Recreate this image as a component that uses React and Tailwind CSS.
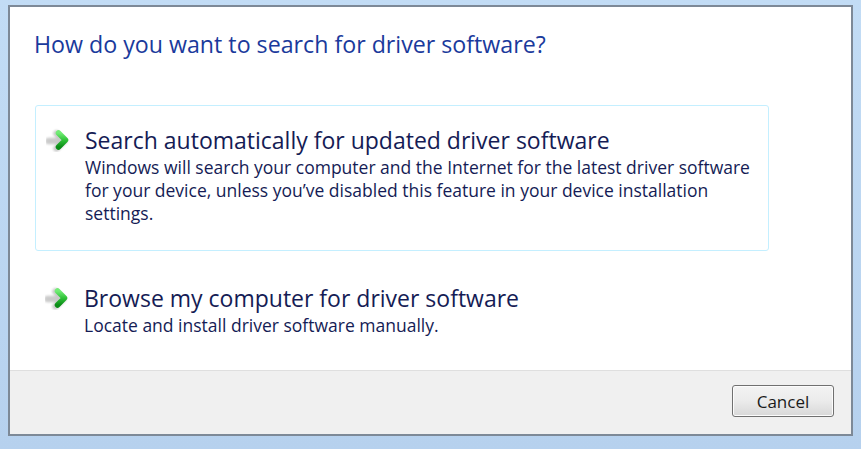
import React from "react";

function Arrow({ id }) {
  return (
    <svg width="24" height="24" viewBox="0 0 24 24" className="shrink-0">
      <defs>
        <linearGradient id={"ag" + id} x1="0" y1="0" x2="0" y2="1">
          <stop offset="0" stopColor="#72ec75" />
          <stop offset="0.5" stopColor="#2fc238" />
          <stop offset="1" stopColor="#0b8c17" />
        </linearGradient>
        <filter id={"sh" + id} x="-40%" y="-40%" width="180%" height="180%">
          <feGaussianBlur stdDeviation="1.3" />
        </filter>
      </defs>
      <g opacity="0.28" filter={"url(#sh" + id + ")"} transform="translate(-1.5,1)">
        <path d="M4 12 H18" stroke="#444" strokeWidth="6.5" strokeLinecap="round" fill="none" />
        <path d="M12 4.5 L19.5 12 L12 19.5" stroke="#444" strokeWidth="6.5" strokeLinecap="round" strokeLinejoin="round" fill="none" />
      </g>
      <path d="M5 12 H18" stroke={"url(#ag" + id + ")"} strokeWidth="5.5" strokeLinecap="round" fill="none" />
      <path d="M12.5 5 L19.5 12 L12.5 19" stroke={"url(#ag" + id + ")"} strokeWidth="5.5" strokeLinecap="round" strokeLinejoin="round" fill="none" />
    </svg>
  );
}

export default function App() {
  const font = { fontFamily: '"Open Sans", "Noto Sans", sans-serif' };
  return (
    <div
      className="w-[861px] h-[449px] bg-gradient-to-b from-[#c2dcf5] to-[#b6d1ee] pt-[5px] pl-[8px] pr-[8px] pb-[13px]"
      style={font}
    >
      <div className="h-full border-2 border-[#7d8997] bg-white flex flex-col">
        <div className="flex-1 pl-[24px] pr-[60px]">
          <div className="pt-[22px] text-[23.2px] leading-[30px] text-[#1a3a9c] whitespace-nowrap">
            How do you want to search for driver software?
          </div>
          <div className="mt-[46px] ml-[1px] w-[734px] h-[146px] border border-[#c4efff] rounded-[3px] flex pl-[10px] pt-[18px]">
            <div className="pt-[4px] mr-[15px]">
              <Arrow id="a" />
            </div>
            <div className="text-[#151c55] whitespace-nowrap">
              <div className="text-[23px] leading-[32px]">
                Search automatically for updated driver software
              </div>
              <div className="text-[17.5px] leading-[23px] mt-[0px]">
                Windows will search your computer and the Internet for the latest driver software
                <br />
                for your device, unless you’ve disabled this feature in your device installation
                <br />
                settings.
              </div>
            </div>
          </div>
          <div className="mt-[31px] ml-[1px] flex pl-[10px]">
            <div className="pt-[4px] mr-[15px]">
              <Arrow id="b" />
            </div>
            <div className="text-[#151c55] whitespace-nowrap">
              <div className="text-[23px] leading-[32px]">
                Browse my computer for driver software
              </div>
              <div className="text-[17.5px] leading-[23px] mt-[0px]">
                Locate and install driver software manually.
              </div>
            </div>
          </div>
        </div>
        <div className="h-[64px] border-t border-[#dfdfdf] bg-[#f0f0f0] flex justify-end items-start pt-[14px] pr-[17px]">
          <button className="w-[102px] h-[32px] rounded-[3px] border border-[#707070] bg-gradient-to-b from-[#f3f3f3] via-[#ebebeb] to-[#d8d8d8] shadow-[inset_0_0_0_1px_#fcfcfc] text-[17px] text-[#1a1a1a] leading-none">
            Cancel
          </button>
        </div>
      </div>
    </div>
  );
}
